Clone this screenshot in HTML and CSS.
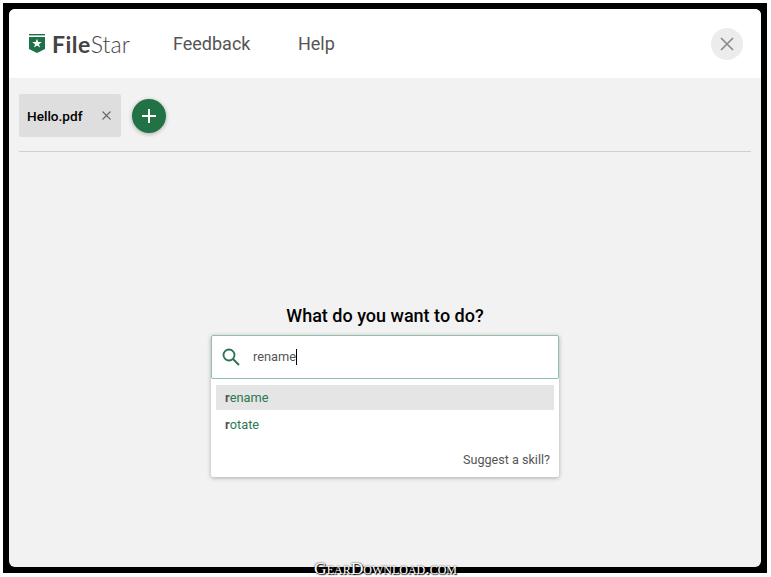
FILE: index.html
```html
<!DOCTYPE html>
<html lang="en">

<head>
  <meta charset="utf-8">
  <title>FileStar</title>
  <link rel="stylesheet" href="styles.css">
</head>

<body>
  <div class="frame">
    <div class="window">
      <header class="topbar">
        <div class="logo">
          <svg class="logo-mark" width="16" height="20" viewBox="0 0 16 20">
            <rect x="0" y="0" width="16" height="1.400" fill="#1f6f47" />
            <path d="M0 3h16v12l-8 4-8-4z" fill="#1f6f47" />
            <path d="M8 4.800l1.300 3.300h3.500l-2.800 2.100 1 3.400L8 11.600l-3 2 1-3.400-2.800-2.100h3.500z" fill="#fff" />
          </svg>
          <span class="logo-text"><b>File</b>Star</span>
        </div>
        <nav class="nav">
          <span>Feedback</span>
          <span>Help</span>
        </nav>
        <button class="close-btn">
          <svg width="14" height="14" viewBox="0 0 14 14">
            <path d="M1 1l12 12M13 1L1 13" stroke="#8a8a8a" stroke-width="1.700" fill="none" />
          </svg>
        </button>
      </header>

      <main class="content">
        <div class="tabs">
          <div class="tab">
            <span>Hello.pdf</span>
            <svg width="9" height="9" viewBox="0 0 9 9">
              <path d="M.5.5l8 8M8.500.5l-8 8" stroke="#666" stroke-width="1.100" fill="none" />
            </svg>
          </div>
          <button class="add-btn">
            <svg width="14" height="14" viewBox="0 0 14 14">
              <path d="M7 0v14M0 7h14" stroke="#fff" stroke-width="2" fill="none" />
            </svg>
          </button>
        </div>

        <div class="prompt">
          <h1>What do you want to do?</h1>
          <div class="picker">
            <div class="search">
              <svg width="20" height="20" viewBox="0 0 20 20">
                <circle cx="8" cy="8" r="5.500" stroke="#2b7350" stroke-width="1.800" fill="none" />
                <path d="M12 12l6 6" stroke="#2b7350" stroke-width="2" fill="none" />
              </svg>
              <span class="query">rename</span>
            </div>
            <ul class="results">
              <li class="active"><b>r</b>ename</li>
              <li><b>r</b>otate</li>
            </ul>
            <div class="suggest">Suggest a skill?</div>
          </div>
        </div>
      </main>
    </div>
  </div>
  <div class="watermark">GearDownload.com</div>
</body>

</html>
```

FILE: styles.css
```css
html, body {
  margin: 0;
  height: 100%;
}

body {
  background: #fff;
  font-family: Roboto, "Liberation Sans", sans-serif;
  overflow: hidden;
}

.frame {
  width: 764px;
  height: 570px;
  margin: 3px 0 0 3px;
  padding: 6px;
  box-sizing: border-box;
  background: #000;
}

.window {
  display: flex;
  flex-direction: column;
  height: 100%;
  border-radius: 6px;
  overflow: hidden;
  background: #f2f2f2;
}

.topbar {
  display: flex;
  align-items: center;
  flex: none;
  height: 69px;
  padding: 0 18px 0 20px;
  background: #fff;
}

.logo {
  display: flex;
  align-items: center;
  gap: 7px;
  width: 144px;
}

.logo-text {
  font-family: Lato, sans-serif;
  font-size: 23px;
  font-weight: 300;
  color: #444;
}

.logo-text b {
  font-weight: 700;
  letter-spacing: 0.5px;
}

.nav {
  display: flex;
  gap: 47.500px;
  flex: 1;
  font-size: 18px;
  color: #555;
}

.close-btn {
  display: flex;
  align-items: center;
  justify-content: center;
  width: 32px;
  height: 32px;
  padding: 0;
  border: 0;
  border-radius: 50%;
  background: #ececec;
}

.content {
  display: flex;
  flex-direction: column;
  flex: 1;
  padding: 16px 10px 0;
}

.tabs {
  display: flex;
  align-items: center;
  gap: 11px;
  padding-bottom: 14px;
  border-bottom: 1px solid #d0d0d0;
}

.tab {
  display: flex;
  align-items: center;
  justify-content: space-between;
  box-sizing: border-box;
  width: 102px;
  height: 43px;
  padding: 0 10px 0 8px;
  border-radius: 2px;
  background: #dedede;
  font-size: 13.600px;
  font-weight: 500;
  color: #000;
}

.add-btn {
  display: flex;
  align-items: center;
  justify-content: center;
  width: 34px;
  height: 34px;
  padding: 0;
  border: 0;
  border-radius: 50%;
  background: #217346;
  box-shadow: 0 1px 4px rgba(0, 0, 0, 0.3);
}

.prompt {
  display: flex;
  flex-direction: column;
  align-items: center;
  margin-top: 152px;
}

.prompt h1 {
  margin: 0 0 7px;
  font-size: 18px;
  line-height: 24px;
  font-weight: 500;
  color: #000;
}

.picker {
  width: 348px;
  border-radius: 2px;
  background: #fff;
  box-shadow: 0 1px 4px rgba(0, 0, 0, 0.3);
}

.search {
  display: flex;
  align-items: center;
  gap: 12px;
  box-sizing: border-box;
  height: 44px;
  padding: 0 9px;
  border: 1px solid #93c0a8;
  border-radius: 2px;
}

.query {
  border-right: 1px solid #000;
  font-size: 12.800px;
  line-height: 16px;
  color: #555;
}

.results {
  margin: 0;
  padding: 6px 5px 0;
  list-style: none;
}

.results li {
  height: 25px;
  margin-bottom: 2px;
  padding-left: 9px;
  font-size: 12.800px;
  line-height: 25px;
  color: #2a7a52;
}

.results li.active {
  background: #e5e5e5;
}

.results b {
  color: #555;
}

.suggest {
  padding: 13px 9px 10px;
  font-size: 12.600px;
  line-height: 15px;
  text-align: right;
  color: #555;
}

.watermark {
  position: absolute;
  left: 0;
  right: 0;
  top: 558px;
  font-family: "Liberation Serif", serif;
  font-size: 17.500px;
  font-variant: small-caps;
  line-height: 20px;
  text-align: center;
  color: #fff;
  text-shadow: 0 0 2px #000, 1px 1px 1px #000;
}
```
